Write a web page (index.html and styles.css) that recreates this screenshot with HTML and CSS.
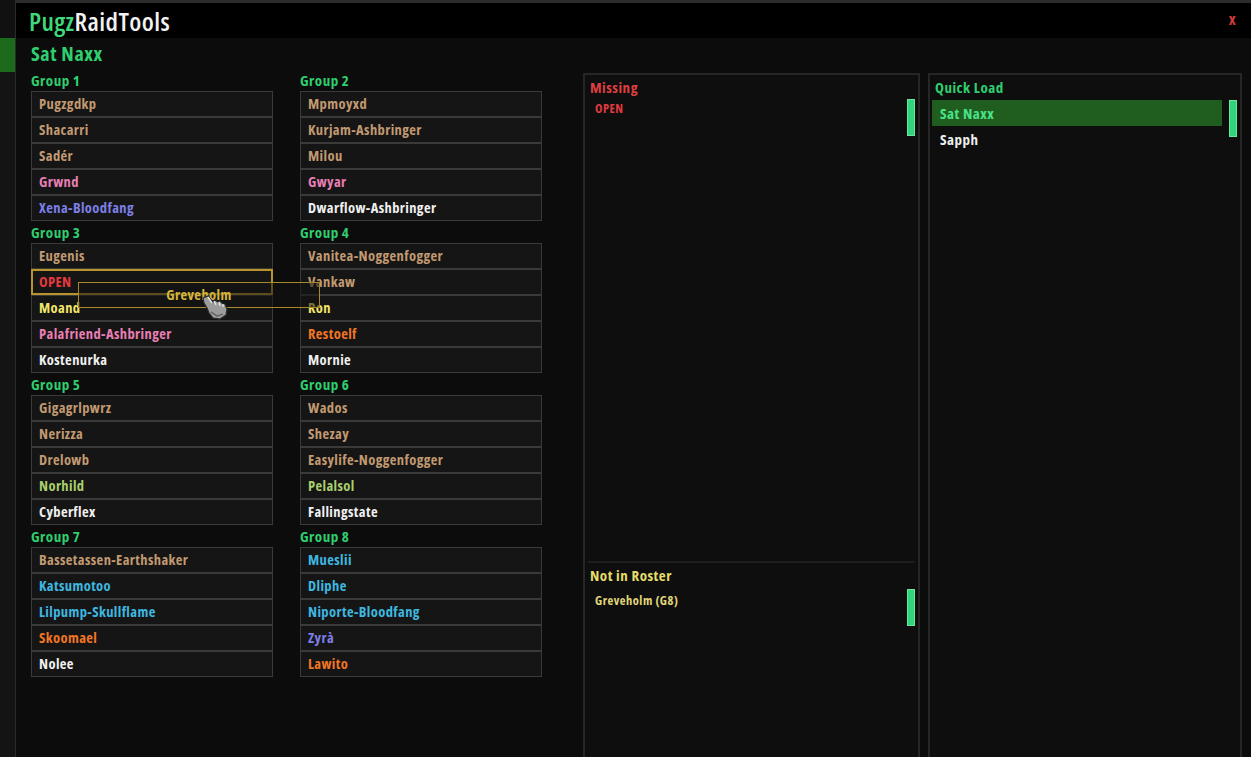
FILE: index.html
```html
<!DOCTYPE html>
<html lang="en">
<head>
    <meta charset="UTF-8">
    <meta name="viewport" content="width=device-width, initial-scale=1.0">
    <title>PugzRaidTools</title>
    <link rel="stylesheet" href="styles.css">
</head>
<body>

<div class="app">
    <aside class="side">
        <div class="side-top"></div>
        <div class="side-tab"></div>
    </aside>

    <div class="window">
        <header class="titlebar">
            <h1 class="title"><span class="brand">Pugz</span>RaidTools</h1>
            <span class="close">x</span>
        </header>

        <div class="content">
            <h2 class="raid-name">Sat Naxx</h2>

            <div class="panels">
                <div class="groups">
                    <div class="group">
                        <div class="group-label">Group 1</div>
                        <div class="slot warrior">Pugzgdkp</div>
                        <div class="slot warrior">Shacarri</div>
                        <div class="slot warrior">Sadér</div>
                        <div class="slot paladin">Grwnd</div>
                        <div class="slot warlock">Xena-Bloodfang</div>
                    </div>
                    <div class="group">
                        <div class="group-label">Group 2</div>
                        <div class="slot warrior">Mpmoyxd</div>
                        <div class="slot warrior">Kurjam-Ashbringer</div>
                        <div class="slot warrior">Milou</div>
                        <div class="slot paladin">Gwyar</div>
                        <div class="slot priest">Dwarflow-Ashbringer</div>
                    </div>
                    <div class="group">
                        <div class="group-label">Group 3</div>
                        <div class="slot warrior">Eugenis</div>
                        <div class="slot open drop-target">OPEN</div>
                        <div class="slot rogue">Moand</div>
                        <div class="slot paladin">Palafriend-Ashbringer</div>
                        <div class="slot priest">Kostenurka</div>
                    </div>
                    <div class="group">
                        <div class="group-label">Group 4</div>
                        <div class="slot warrior">Vanitea-Noggenfogger</div>
                        <div class="slot warrior">Vankaw</div>
                        <div class="slot rogue">Ron</div>
                        <div class="slot druid">Restoelf</div>
                        <div class="slot priest">Mornie</div>
                    </div>
                    <div class="group">
                        <div class="group-label">Group 5</div>
                        <div class="slot warrior">Gigagrlpwrz</div>
                        <div class="slot warrior">Nerizza</div>
                        <div class="slot warrior">Drelowb</div>
                        <div class="slot hunter">Norhild</div>
                        <div class="slot priest">Cyberflex</div>
                    </div>
                    <div class="group">
                        <div class="group-label">Group 6</div>
                        <div class="slot warrior">Wados</div>
                        <div class="slot warrior">Shezay</div>
                        <div class="slot warrior">Easylife-Noggenfogger</div>
                        <div class="slot hunter">Pelalsol</div>
                        <div class="slot priest">Fallingstate</div>
                    </div>
                    <div class="group">
                        <div class="group-label">Group 7</div>
                        <div class="slot warrior">Bassetassen-Earthshaker</div>
                        <div class="slot mage">Katsumotoo</div>
                        <div class="slot mage">Lilpump-Skullflame</div>
                        <div class="slot druid">Skoomael</div>
                        <div class="slot priest">Nolee</div>
                    </div>
                    <div class="group">
                        <div class="group-label">Group 8</div>
                        <div class="slot mage">Mueslii</div>
                        <div class="slot mage">Dliphe</div>
                        <div class="slot mage">Niporte-Bloodfang</div>
                        <div class="slot warlock">Zyrà</div>
                        <div class="slot druid">Lawito</div>
                    </div>
                </div>

                <section class="panel missing">
                    <div class="sub sub-missing">
                        <h3 class="sub-title red">Missing</h3>
                        <div class="list-wrap">
                            <ul class="list">
                                <li class="open">OPEN</li>
                            </ul>
                            <div class="track"><div class="thumb"></div></div>
                        </div>
                    </div>
                    <div class="sub sub-roster">
                        <h3 class="sub-title yellow">Not in Roster</h3>
                        <div class="list-wrap">
                            <ul class="list">
                                <li class="yellow-item">Greveholm (G8)</li>
                            </ul>
                            <div class="track"><div class="thumb"></div></div>
                        </div>
                    </div>
                </section>

                <section class="panel quick">
                    <h3 class="sub-title green">Quick Load</h3>
                    <div class="list-wrap">
                        <ul class="list quick-list">
                            <li class="selected">Sat Naxx</li>
                            <li>Sapph</li>
                        </ul>
                        <div class="track"><div class="thumb"></div></div>
                    </div>
                </section>
            </div>
        </div>
    </div>

    <!-- dragged player ghost + cursor -->
    <div class="drag-ghost">Greveholm</div>
    <svg class="cursor" width="30" height="28" viewBox="0 0 30 28">
        <path d="M4 6 L9 4 L14 10 L16 8 L19 10 L21 9 L24 12 L26 12 L28 17 L27 23 L21 27 L14 26 L10 21 L8 16 L5 11 Z" fill="#9c9c9c" stroke="#2a2a2a" stroke-width="1.2"/>
        <path d="M9 5 L13 11 M15 9 L17 13 M20 10 L21 14 M24 12 L24 15" stroke="#e6e6e6" stroke-width="1.4" fill="none"/>
        <path d="M12 20 L18 24 L24 22" stroke="#5a5a5a" stroke-width="1.2" fill="none"/>
    </svg>
</div>

</body>
</html>
```

FILE: styles.css
```css
body {
    margin: 0;
    padding: 0;
    background-color: #0c0c0c;
    font-family: "Open Sans", "DejaVu Sans Condensed", sans-serif;
    font-stretch: 75%;
    font-weight: bold;
    letter-spacing: 0.4px;
    overflow: hidden;
}
.app {
    position: relative;
    display: flex;
    width: 1251px;
    height: 757px;
    overflow: hidden;
}

/* left strip of the parent frame */
.side {
    width: 15px;
    background-color: #141414;
    border-right: 1px solid #2b2b2b;
    flex-shrink: 0;
}
.side-top {
    height: 38px;
    background-color: #111;
}
.side-tab {
    height: 34px;
    background-color: #1d6a1d;
}

.window {
    flex: 1;
    display: flex;
    flex-direction: column;
    background-color: #0c0c0c;
}
.titlebar {
    height: 38px;
    box-sizing: border-box;
    border-top: 3px solid #2c2c2c;
    background-color: #000;
    display: flex;
    align-items: center;
    justify-content: space-between;
    padding: 0 15px 0 13px;
}
.title {
    margin: 0;
    font-size: 26px;
    font-weight: 600;
    color: #f2f2f2;
    line-height: 30px;
}
.brand {
    color: #3fd97c;
}
.close {
    color: #cf3a3a;
    font-size: 16px;
    margin-top: -3px;
}

.content {
    padding: 4px 9px 0 15px;
    flex: 1;
    display: flex;
    flex-direction: column;
}
.raid-name {
    margin: 0 0 7px 0;
    height: 24px;
    line-height: 24px;
    font-size: 20px;
    letter-spacing: 0.6px;
    color: #2fcf6f;
}

.panels {
    flex: 1;
    display: flex;
    align-items: stretch;
}

.groups {
    display: grid;
    grid-template-columns: 242px 242px;
    column-gap: 27px;
    row-gap: 4px;
    align-content: start;
    margin-right: 41px;
}
.group-label {
    height: 18px;
    line-height: 15px;
    font-size: 15px;
    letter-spacing: 0.5px;
    color: #2fcf6f;
}
.slot {
    height: 26px;
    box-sizing: border-box;
    border: 1px solid #3a3a3a;
    background-color: #151515;
    padding-left: 7px;
    line-height: 24px;
    font-size: 14.5px;
}
.drop-target {
    border: 2px solid #b8952a;
    padding-left: 6px;
    line-height: 22px;
}

/* class colours */
.warrior { color: #c29a72; }
.paladin { color: #e97fb4; }
.warlock { color: #7d7fe6; }
.priest { color: #f0f0f0; }
.rogue { color: #f2e66a; }
.druid { color: #f17524; }
.hunter { color: #a9cf6c; }
.mage { color: #3fb8e0; }
.open { color: #e23a3f; }

.panel {
    box-sizing: border-box;
    border: 2px solid #262626;
    border-bottom: none;
    background-color: #0e0e0e;
    margin-bottom: -10px;
}
.missing {
    width: 337px;
    margin-right: 8px;
    display: flex;
    flex-direction: column;
}
.quick {
    width: 314px;
}
.sub-missing {
    height: 486px;
}
.sub-roster {
    flex: 1;
    border-top: 2px solid #1e1e1e;
    margin: 0 3px;
}
.sub-roster .sub-title {
    padding-left: 2px;
}
.sub-title {
    margin: 0;
    padding: 4px 5px 0 5px;
    font-size: 15px;
    letter-spacing: 0.5px;
    line-height: 17px;
}
.red { color: #dd3f40; }
.yellow { color: #e5de6a; }
.green { color: #2fcf6f; }

.list-wrap {
    display: flex;
    margin-top: 3px;
}
.list {
    flex: 1;
    list-style: none;
    margin: 0;
    padding: 0;
    font-size: 12.5px;
    letter-spacing: 0.5px;
}
.list li {
    padding-left: 10px;
    line-height: 20px;
}
.sub-roster .list {
    padding-top: 4px;
}
.sub-roster .list li {
    padding-left: 7px;
}
.yellow-item {
    color: #e1d77a;
}
.track {
    width: 8px;
    margin: 0 3px 0 6px;
}
.sub-roster .track {
    margin-right: 0;
    margin-top: 2px;
}
.thumb {
    height: 37px;
    box-sizing: border-box;
    background-color: #2fd57a;
    border: 1px solid #6ae6a0;
}

.quick .list-wrap {
    margin-top: 4px;
}
.quick-list {
    margin-left: 2px;
    font-size: 15px;
}
.quick-list li {
    height: 26px;
    line-height: 26px;
    padding-left: 8px;
    color: #f0f0f0;
}
.quick-list .selected {
    background-color: #1f5e1f;
    color: #4be38a;
}
.quick .track {
    margin: 0 3px 0 7px;
}

/* dragged item overlay */
.drag-ghost {
    position: absolute;
    left: 78px;
    top: 282px;
    width: 242px;
    height: 26px;
    box-sizing: border-box;
    border: 1px solid #a88a2c;
    background-color: rgba(18, 18, 18, 0.55);
    color: #d7b63c;
    font-size: 14.5px;
    line-height: 24px;
    text-align: center;
}
.cursor {
    position: absolute;
    left: 199px;
    top: 292px;
}
```
